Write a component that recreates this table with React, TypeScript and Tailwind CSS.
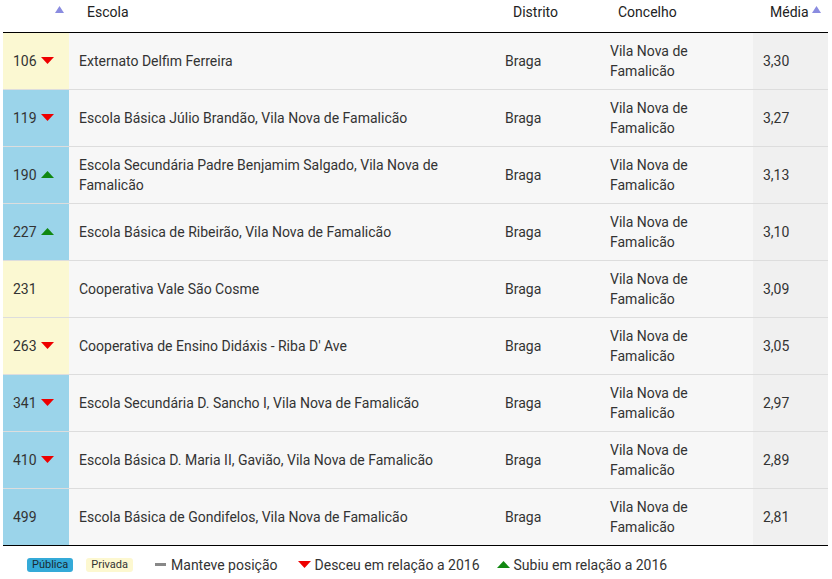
import React from 'react';

type Row = {
    rank: number;
    tipo: 'publica' | 'privada';
    trend: 'up' | 'down' | 'same' | null;
    escola: string;
    distrito: string;
    concelho: string;
    media: string;
};

const rows: Row[] = [
    { rank: 106, tipo: 'privada', trend: 'down', escola: 'Externato Delfim Ferreira', distrito: 'Braga', concelho: 'Vila Nova de Famalicão', media: '3,30' },
    { rank: 119, tipo: 'publica', trend: 'down', escola: 'Escola Básica Júlio Brandão, Vila Nova de Famalicão', distrito: 'Braga', concelho: 'Vila Nova de Famalicão', media: '3,27' },
    { rank: 190, tipo: 'publica', trend: 'up', escola: 'Escola Secundária Padre Benjamim Salgado, Vila Nova de Famalicão', distrito: 'Braga', concelho: 'Vila Nova de Famalicão', media: '3,13' },
    { rank: 227, tipo: 'publica', trend: 'up', escola: 'Escola Básica de Ribeirão, Vila Nova de Famalicão', distrito: 'Braga', concelho: 'Vila Nova de Famalicão', media: '3,10' },
    { rank: 231, tipo: 'privada', trend: null, escola: 'Cooperativa Vale São Cosme', distrito: 'Braga', concelho: 'Vila Nova de Famalicão', media: '3,09' },
    { rank: 263, tipo: 'privada', trend: 'down', escola: "Cooperativa de Ensino Didáxis - Riba D' Ave", distrito: 'Braga', concelho: 'Vila Nova de Famalicão', media: '3,05' },
    { rank: 341, tipo: 'publica', trend: 'down', escola: 'Escola Secundária D. Sancho I, Vila Nova de Famalicão', distrito: 'Braga', concelho: 'Vila Nova de Famalicão', media: '2,97' },
    { rank: 410, tipo: 'publica', trend: 'down', escola: 'Escola Básica D. Maria II, Gavião, Vila Nova de Famalicão', distrito: 'Braga', concelho: 'Vila Nova de Famalicão', media: '2,89' },
    { rank: 499, tipo: 'publica', trend: null, escola: 'Escola Básica de Gondifelos, Vila Nova de Famalicão', distrito: 'Braga', concelho: 'Vila Nova de Famalicão', media: '2,81' },
];

const Down = () => (
    <svg width="13" height="7" viewBox="0 0 13 7" className="inline-block">
        <polygon points="0,0 13,0 6.5,7" fill="#ee0000" />
    </svg>
);

const Up = () => (
    <svg width="13" height="7" viewBox="0 0 13 7" className="inline-block">
        <polygon points="0,7 13,7 6.5,0" fill="#118811" />
    </svg>
);

const SortUp = () => (
    <svg width="9" height="7" viewBox="0 0 9 7" className="inline-block">
        <polygon points="0,7 9,7 4.5,0" fill="#8a8ce0" />
    </svg>
);

const App: React.FC = () => {
    return (
        <div className="min-h-screen bg-white pl-[3px] pr-[4px] text-[14px] text-[#333] font-['Roboto',sans-serif] leading-5">
            <table className="w-[825px] border-collapse table-fixed">
                <colgroup>
                    <col className="w-[66px]" />
                    <col className="w-[426px]" />
                    <col className="w-[105px]" />
                    <col className="w-[153px]" />
                    <col className="w-[75px]" />
                </colgroup>
                <thead>
                    <tr className="h-[32px] border-b border-black text-[#222]">
                        <th className="font-normal align-top pt-[2px] text-right pr-[5px]">
                            <span className="relative top-[-4px]"><SortUp /></span>
                        </th>
                        <th className="font-normal align-top pt-[2px] text-left pl-[18px]">Escola</th>
                        <th className="font-normal align-top pt-[2px] text-left pl-[18px]">Distrito</th>
                        <th className="font-normal align-top pt-[2px] text-left pl-[18px]">Concelho</th>
                        <th className="font-normal align-top pt-[2px] text-left pl-[17px] whitespace-nowrap">
                            Média <span className="relative top-[-4px]"><SortUp /></span>
                        </th>
                    </tr>
                </thead>
                <tbody>
                    {rows.map((r) => (
                        <tr key={r.rank} className="h-[57px] border-b border-[#dddddd] bg-[#f7f7f7] last:border-black">
                            <td className={`pl-[10px] ${r.tipo === 'publica' ? 'bg-[#9bd4ea]' : 'bg-[#fbf8d2]'}`}>
                                <span className="inline-flex items-center gap-[4px]">
                                    {r.rank}
                                    {r.trend === 'down' && <Down />}
                                    {r.trend === 'up' && <Up />}
                                </span>
                            </td>
                            <td className="px-[10px]">{r.escola}</td>
                            <td className="px-[10px]">{r.distrito}</td>
                            <td className="px-[10px]">
                                <div className="w-[100px]">{r.concelho}</div>
                            </td>
                            <td className="px-[10px] bg-[#f0f0f0]">{r.media}</td>
                        </tr>
                    ))}
                </tbody>
            </table>
            <div className="flex items-center h-[38px] pl-[24px] text-[14px]">
                <span className="bg-[#34aad8] text-[#1a2a33] text-[11px] leading-[14px] px-[5px] rounded-[3px]">Pública</span>
                <span className="bg-[#fdf8d0] text-[#333] text-[11px] leading-[14px] px-[5px] rounded-[3px] ml-[13px]">Privada</span>
                <span className="inline-block w-[11px] h-[3px] bg-[#888] ml-[22px] mr-[5px]" />
                <span>Manteve posição</span>
                <span className="ml-[20px] mr-[4px] flex"><Down /></span>
                <span>Desceu em relação a 2016</span>
                <span className="ml-[17px] mr-[4px] flex"><Up /></span>
                <span>Subiu em relação a 2016</span>
            </div>
        </div>
    );
};

export default App;
